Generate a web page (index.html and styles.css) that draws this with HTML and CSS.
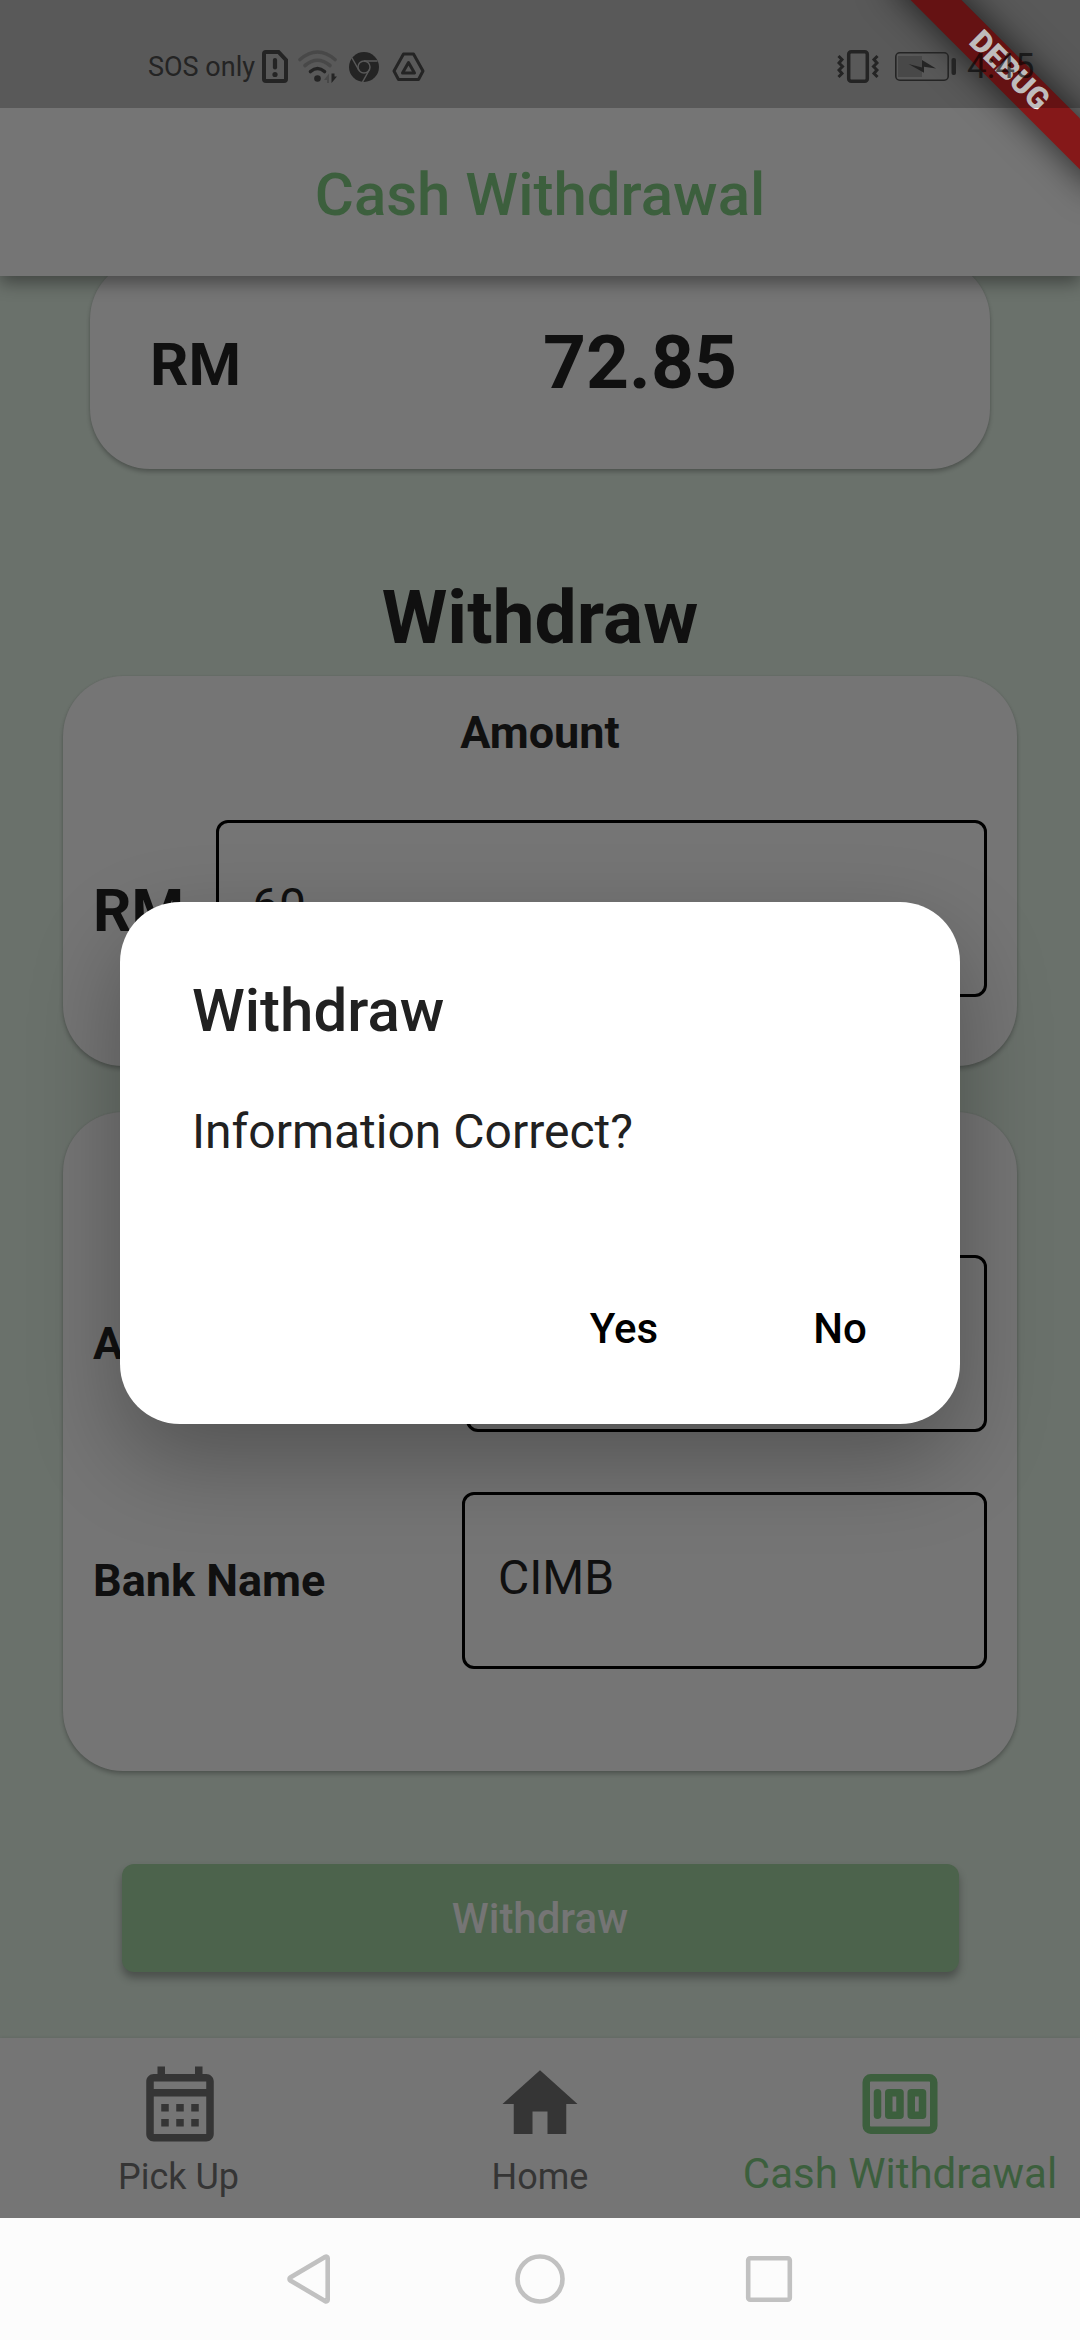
FILE: index.html
```html
<!DOCTYPE html>
<html lang="en">
<head>
<meta charset="utf-8">
<title>Cash Withdrawal</title>
<link rel="stylesheet" href="styles.css">
</head>
<body>
<div class="screen">
  <header class="app-bar"><h1 class="app-title">Cash Withdrawal</h1></header>

  <main class="content">
    <section class="card balance">
      <span class="currency">RM</span>
      <span class="balance-value">72.85</span>
    </section>
    <h2 class="heading">Withdraw</h2>
    <section class="card amount">
      <h3 class="card-title">Amount</h3>
      <div class="row amount-row">
        <span class="currency">RM</span>
        <div class="field">60</div>
      </div>
    </section>
    <section class="card bank">
      <div class="row account-row">
        <span class="label">Account No</span>
        <div class="field"></div>
      </div>
      <div class="row bank-row">
        <span class="label">Bank Name</span>
        <div class="field">CIMB</div>
      </div>
    </section>
    <div class="submit">Withdraw</div>
  </main>

  <nav class="tabs">
    <div class="tab">
      <svg class="tab-icon" viewBox="0 0 24 24" fill="currentColor"><path fill-rule="evenodd" d="M19 4h-1V2h-2v2H8V2H6v2H5c-1.100 0-2 .9-2 2v14c0 1.100.9 2 2 2h14c1.100 0 2-.9 2-2V6c0-1.100-.9-2-2-2zM5 6h14v2H5zM5 10h14v10H5z"/><path d="M7 12h2v2H7zM11 12h2v2h-2zM15 12h2v2h-2zM7 16h2v2H7zM11 16h2v2h-2zM15 16h2v2h-2z"/></svg>
      <span class="tab-label pick-up">Pick Up</span>
    </div>
    <div class="tab">
      <svg class="tab-icon" viewBox="0 0 24 24" fill="currentColor"><path d="M10 20v-6h4v6h5v-8h3L12 3 2 12h3v8z"/></svg>
      <span class="tab-label">Home</span>
    </div>
    <div class="tab active">
      <svg class="tab-icon" viewBox="0 0 24 24" fill="none" stroke="currentColor" stroke-width="2"><rect x="3" y="5" width="18" height="14" rx="1.200"/><path d="M6 9v6" stroke-linecap="round"/><rect x="9" y="9" width="3" height="6" stroke-linejoin="round"/><rect x="15" y="9" width="3" height="6" stroke-linejoin="round"/></svg>
      <span class="tab-label">Cash Withdrawal</span>
    </div>
  </nav>

  <div class="system-nav">
    <svg class="system-icon" viewBox="0 0 54 54"><path d="M43.700 6v42a1.500 1.500 0 0 1-2.300 1.200L6.300 28.500a1.800 1.800 0 0 1 0-3L41.400 4.800a1.500 1.500 0 0 1 2.300 1.200z"/></svg>
    <svg class="system-icon" viewBox="0 0 54 54"><circle cx="27" cy="27" r="22.500"/></svg>
    <svg class="system-icon" viewBox="0 0 54 54"><rect x="6.200" y="6.200" width="41.600" height="41.600" rx="2"/></svg>
  </div>

  <div class="dialog-layer">
    <div class="dialog">
      <h2 class="dialog-title">Withdraw</h2>
      <p class="dialog-text">Information Correct?</p>
      <div class="dialog-actions"><span class="action">Yes</span><span class="action">No</span></div>
    </div>
  </div>

  <div class="banner-clip"><div class="banner">DEBUG</div></div>

  <div class="status-bar">
    <span class="carrier">SOS only</span>
    <svg class="sim" viewBox="0 0 26 33"><path d="M4 2h12.500L24 10v19q0 2-2 2H4q-2 0-2-2V4q0-2 2-2z" fill="none" stroke="currentColor" stroke-width="4"/><path d="M13 10v7.500" stroke="currentColor" stroke-width="4.200" stroke-linecap="round"/><circle cx="13" cy="24.500" r="2.600" fill="currentColor"/></svg>
    <svg class="wifi" viewBox="0 0 40 33" fill="none" stroke="currentColor" stroke-width="3.600" stroke-linecap="round"><path d="M2 9.500q17.500-15 35 0" opacity=".32"/><path d="M7 15.500q12.500-10.500 25 0" opacity=".32"/><path d="M12.500 21.500q7-6 14 0"/><circle cx="19.500" cy="28.500" r="3.300" fill="currentColor" stroke="none"/><path d="M26 30l5-6.500V33h-2v-3z" fill="currentColor" stroke="none" opacity=".32"/><path d="M33.500 23.500v9.500l5.500-6.500h-2.500v-3z" fill="currentColor" stroke="none"/></svg>
    <svg class="chrome" viewBox="0 0 30 30"><circle cx="15" cy="15" r="15" fill="currentColor"/><g fill="none" stroke="#595959" stroke-width="1.500"><circle cx="15" cy="15" r="6"/><path d="M15 9h13.500M9.800 18 3 6M20.200 18 13.500 30"/></g></svg>
    <svg class="drive" viewBox="0 0 33 30" fill="none" stroke="currentColor" stroke-width="3" stroke-linejoin="round"><path d="M11.500 2h10l9.500 17-4.500 8.500h-20L2 19z"/><path d="M16.500 10.500 22.500 21h-12z"/></svg>
    <svg class="vibrate" viewBox="0 0 42 33" fill="none" stroke="currentColor"><rect x="11.700" y="1.800" width="18.600" height="29.400" rx="2.500" stroke-width="3.500"/><path d="M1.500 6l3.500 3.500L2 13l3.500 3.500L2 20l3 3.500L1.500 27M40.500 6 37 9.500 40 13l-3.500 3.500L40 20l-3 3.500 3.500 3.500" stroke-width="3"/></svg>
    <svg class="battery" viewBox="0 0 62 29"><rect x=".8" y=".8" width="52.400" height="27.400" rx="4" fill="none" stroke="currentColor" stroke-width="1.600"/><path d="M3 4h24v21H3z" fill="#484848"/><path d="M13.500 12 27 15.500V8l14 8.500-12-1.800v6z" fill="currentColor"/><rect x="56.500" y="6" width="4.500" height="17" rx="2" fill="currentColor"/></svg>
    <span class="clock">4:45</span>
  </div>
</div>
</body>
</html>
```

FILE: styles.css
```css
* { box-sizing: border-box; margin: 0; padding: 0; }

body { font-family: Roboto, sans-serif; color: #101010; }

.screen {
  position: relative;
  width: 1080px;
  height: 2340px;
  overflow: hidden;
  display: flex;
  flex-direction: column;
  background: #6a716b;
}

.app-bar {
  z-index: 1;
  height: 276px;
  padding-top: 112px;
  display: flex;
  align-items: center;
  justify-content: center;
  background: #757575;
  box-shadow: 0 7px 16px rgba(0, 0, 0, .38);
}
.app-title { font-size: 60px; font-weight: 500; color: #3c5f3d; }

.content {
  height: 1762px;
  overflow: hidden;
  display: flex;
  flex-direction: column;
  align-items: center;
}

.card {
  flex: none;
  background: #757575;
  border-radius: 60px;
  box-shadow: 0 3px 4px rgba(0, 0, 0, .24), 0 0 2px rgba(0, 0, 0, .08);
}
.balance {
  width: 900px;
  height: 210px;
  margin-top: -17px;
  padding-left: 60px;
  display: grid;
  grid-template-columns: 200px 580px;
  align-items: center;
}
.balance-value { font-size: 75px; font-weight: 700; text-align: center; margin-top: -5px; }
.currency { font-size: 60px; font-weight: 700; }

.heading { margin: 103px 0 14px; font-size: 75px; line-height: 90px; font-weight: 700; }

.amount { width: 954px; height: 390px; padding: 30px 30px 0; }
.card-title { font-size: 45px; line-height: 54px; font-weight: 700; text-align: center; margin-bottom: 60px; }

.row { display: grid; align-items: center; }
.amount-row { grid-template-columns: 123px 771px; }
.amount-row .currency { padding-top: 4px; }
.account-row { grid-template-columns: 373px 521px; }
.bank-row { grid-template-columns: 369px 525px; }

.field {
  height: 177px;
  padding: 0 33px 6px;
  display: flex;
  align-items: center;
  border: 3px solid #000;
  border-radius: 12px;
  font-size: 48px;
}
.label { font-size: 45px; font-weight: 700; white-space: nowrap; }

.bank {
  width: 954px;
  height: 659px;
  margin-top: 46px;
  padding: 143px 30px 0;
  display: flex;
  flex-direction: column;
  gap: 60px;
}

.submit {
  flex: none;
  width: 837px;
  height: 108px;
  margin-top: 93px;
  display: flex;
  align-items: center;
  justify-content: center;
  border-radius: 12px;
  background: #4c634c;
  color: #757575;
  font-size: 42px;
  font-weight: 500;
  box-shadow: 0 6px 8px rgba(0, 0, 0, .3);
}

.tabs {
  z-index: 1;
  height: 180px;
  display: grid;
  grid-template-columns: repeat(3, 360px);
  background: #757575;
  color: #353535;
  box-shadow: 0 0 3px rgba(0, 0, 0, .12);
}
.tab { display: flex; flex-direction: column; align-items: center; padding-top: 21px; }
.tab-icon { width: 90px; height: 90px; }
.tab-label { margin-top: 4px; font-size: 36px; line-height: 48px; }
.pick-up { padding-right: 3px; }
.tab.active { color: #3c5f3d; }
.active .tab-label { margin-top: 0; font-size: 42px; line-height: 50px; white-space: nowrap; }

.system-nav {
  z-index: 1;
  height: 122px;
  padding: 0 284px;
  display: flex;
  align-items: center;
  justify-content: space-between;
  background: #fcfcfc;
}
.system-icon { width: 54px; height: 54px; fill: none; stroke: #c1c1c1; stroke-width: 4.600px; }

.dialog-layer {
  position: absolute;
  z-index: 2;
  inset: 108px 0 122px;
  display: flex;
  align-items: center;
  justify-content: center;
}
.dialog {
  width: 840px;
  height: 522px;
  padding: 74px 24px 0 72px;
  border-radius: 60px;
  background: #fff;
  color: #212121;
  box-shadow: 0 36px 90px rgba(0, 0, 0, .29);
}
.dialog-title { font-size: 60px; line-height: 70px; font-weight: 500; }
.dialog-text { margin-top: 58px; font-size: 48px; line-height: 56px; }
.dialog-actions { margin-top: 144px; display: flex; justify-content: flex-end; gap: 24px; }
.action { width: 192px; text-align: center; font-size: 42px; line-height: 50px; font-weight: 500; color: #000; }

/* Corner ribbon */
.banner-clip { position: absolute; z-index: 3; top: 0; right: 0; width: 240px; height: 240px; overflow: hidden; }
.banner {
  position: absolute;
  left: 18px;
  top: 54px;
  width: 300px;
  height: 36px;
  transform: rotate(45deg);
  background: #851819;
  color: rgba(255, 255, 255, .98);
  font-size: 30.600px;
  line-height: 31px;
  font-weight: 900;
  text-align: center;
  box-shadow: 0 0 36px rgba(0, 0, 0, .7);
}

.status-bar {
  position: absolute;
  z-index: 4;
  top: 0;
  left: 0;
  width: 1080px;
  height: 108px;
  padding: 25px 44px 0 148px;
  display: flex;
  align-items: center;
  background: rgba(0, 0, 0, .24);
  color: #242424;
}
.status-bar svg { flex: none; }
.carrier { width: 114px; padding-top: 1px; font-size: 27px; white-space: nowrap; }
.sim { width: 26px; height: 33px; }
.wifi { width: 40px; height: 33px; margin-left: 10px; }
.chrome { width: 30px; height: 30px; margin-left: 11px; }
.drive { width: 33px; height: 30px; margin-left: 13px; }
.vibrate { width: 42px; height: 33px; margin-left: auto; }
.battery { width: 62px; height: 29px; margin-left: 16px; }
.clock { width: 69px; margin-left: 10px; font-size: 35px; color: rgba(0, 0, 0, .6); white-space: nowrap; }
```
